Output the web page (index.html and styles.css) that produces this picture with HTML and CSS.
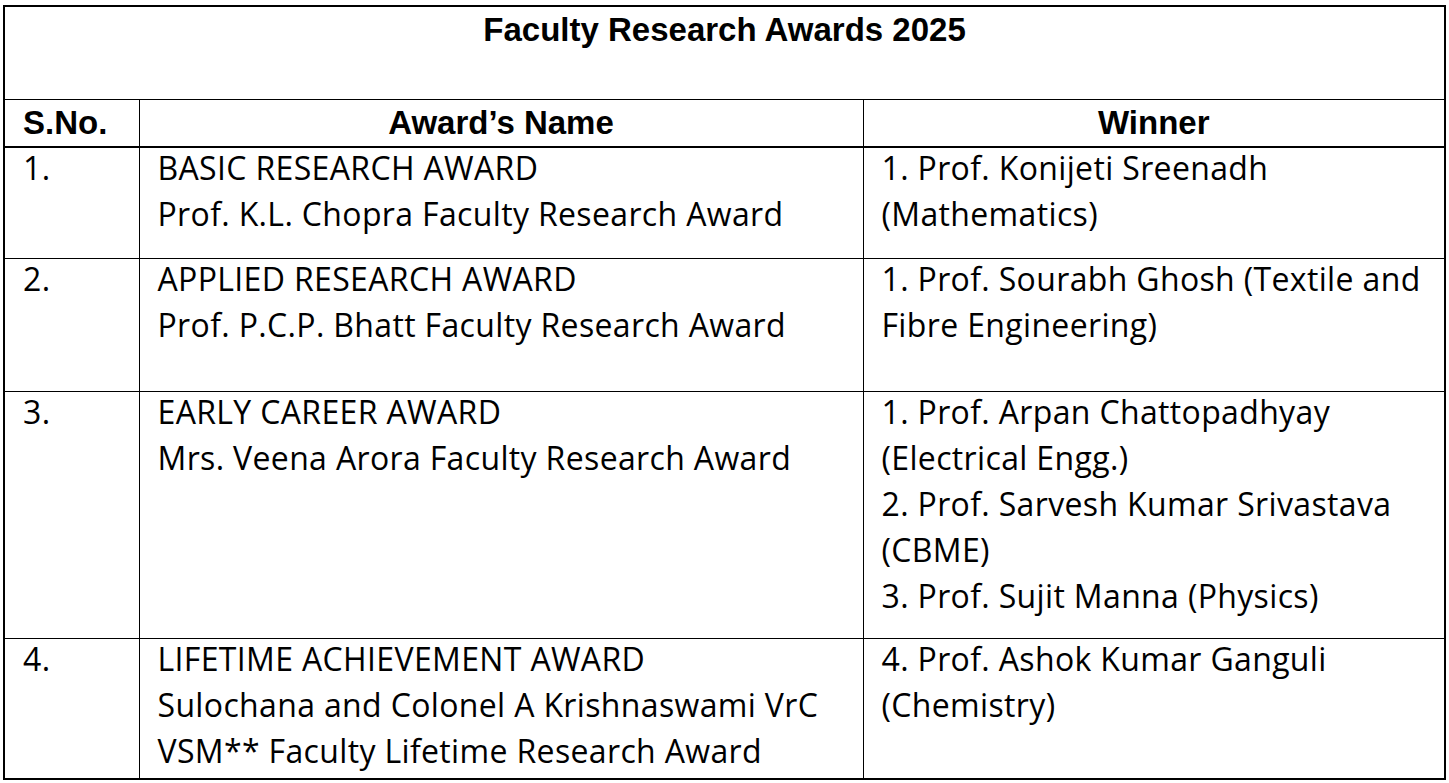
FILE: index.html
```html
<!DOCTYPE html>
<html lang="en">
<head>
<meta charset="utf-8">
<title>Faculty Research Awards 2025</title>
<link rel="stylesheet" href="styles.css">
</head>
<body>
<table class="awards">
  <colgroup>
    <col class="col-sno">
    <col class="col-award">
    <col class="col-winner">
  </colgroup>
  <thead>
    <tr class="row-title">
      <th colspan="3" class="title">Faculty Research Awards 2025</th>
    </tr>
    <tr class="row-head">
      <th class="head head-left">S.No.</th>
      <th class="head">Award’s Name</th>
      <th class="head">Winner</th>
    </tr>
  </thead>
  <tbody>
    <tr class="row-1">
      <td class="cell"><div class="lines">1.</div></td>
      <td class="cell"><div class="lines">BASIC RESEARCH AWARD<br>Prof. K.L. Chopra Faculty Research Award</div></td>
      <td class="cell"><div class="lines">1. Prof. Konijeti Sreenadh<br>(Mathematics)</div></td>
    </tr>
    <tr class="row-2">
      <td class="cell"><div class="lines">2.</div></td>
      <td class="cell"><div class="lines">APPLIED RESEARCH AWARD<br>Prof. P.C.P. Bhatt Faculty Research Award</div></td>
      <td class="cell"><div class="lines">1. Prof. Sourabh Ghosh (Textile and<br>Fibre Engineering)</div></td>
    </tr>
    <tr class="row-3">
      <td class="cell"><div class="lines">3.</div></td>
      <td class="cell"><div class="lines">EARLY CAREER AWARD<br>Mrs. Veena Arora Faculty Research Award</div></td>
      <td class="cell"><div class="lines">1. Prof. Arpan Chattopadhyay<br>(Electrical Engg.)<br>2. Prof. Sarvesh Kumar Srivastava<br>(CBME)<br>3. Prof. Sujit Manna (Physics)</div></td>
    </tr>
    <tr class="row-4">
      <td class="cell"><div class="lines">4.</div></td>
      <td class="cell"><div class="lines">LIFETIME ACHIEVEMENT AWARD<br>Sulochana and Colonel A Krishnaswami VrC<br>VSM** Faculty Lifetime Research Award</div></td>
      <td class="cell"><div class="lines">4. Prof. Ashok Kumar Ganguli<br>(Chemistry)</div></td>
    </tr>
  </tbody>
</table>
</body>
</html>
```

FILE: styles.css
```css
html, body {
  margin: 0;
  padding: 0;
  background: #ffffff;
}

body {
  padding: 5px 0 0 3px;
}

.awards {
  border-collapse: collapse;
  table-layout: fixed;
  width: 1441px;
  border: 2px solid #000;
  color: #000;
}

.col-sno { width: 135px; }
.col-award { width: 724px; }
.col-winner { width: 582px; }

.awards th,
.awards td {
  border: 1px solid #000;
  vertical-align: top;
  padding: 0 18px;
  line-height: 46px;
  white-space: nowrap;
}

.title,
.head {
  font-family: "Liberation Sans", Arial, sans-serif;
  font-weight: bold;
  font-size: 33px;
  text-align: center;
}

.head-left {
  text-align: left;
  padding-left: 17px;
}

.row-head .head {
  border-bottom: 2px solid #000;
}

.cell {
  font-family: "Open Sans", "Noto Sans", sans-serif;
  font-size: 32px;
  letter-spacing: 0.35px;
  text-align: left;
}

.lines {
  margin-top: -3px;
}

.row-title { height: 93px; }
.row-head { height: 48px; }
.row-1 { height: 111px; }
.row-2 { height: 133px; }
.row-3 { height: 247px; }
.row-4 { height: 141px; }
```
